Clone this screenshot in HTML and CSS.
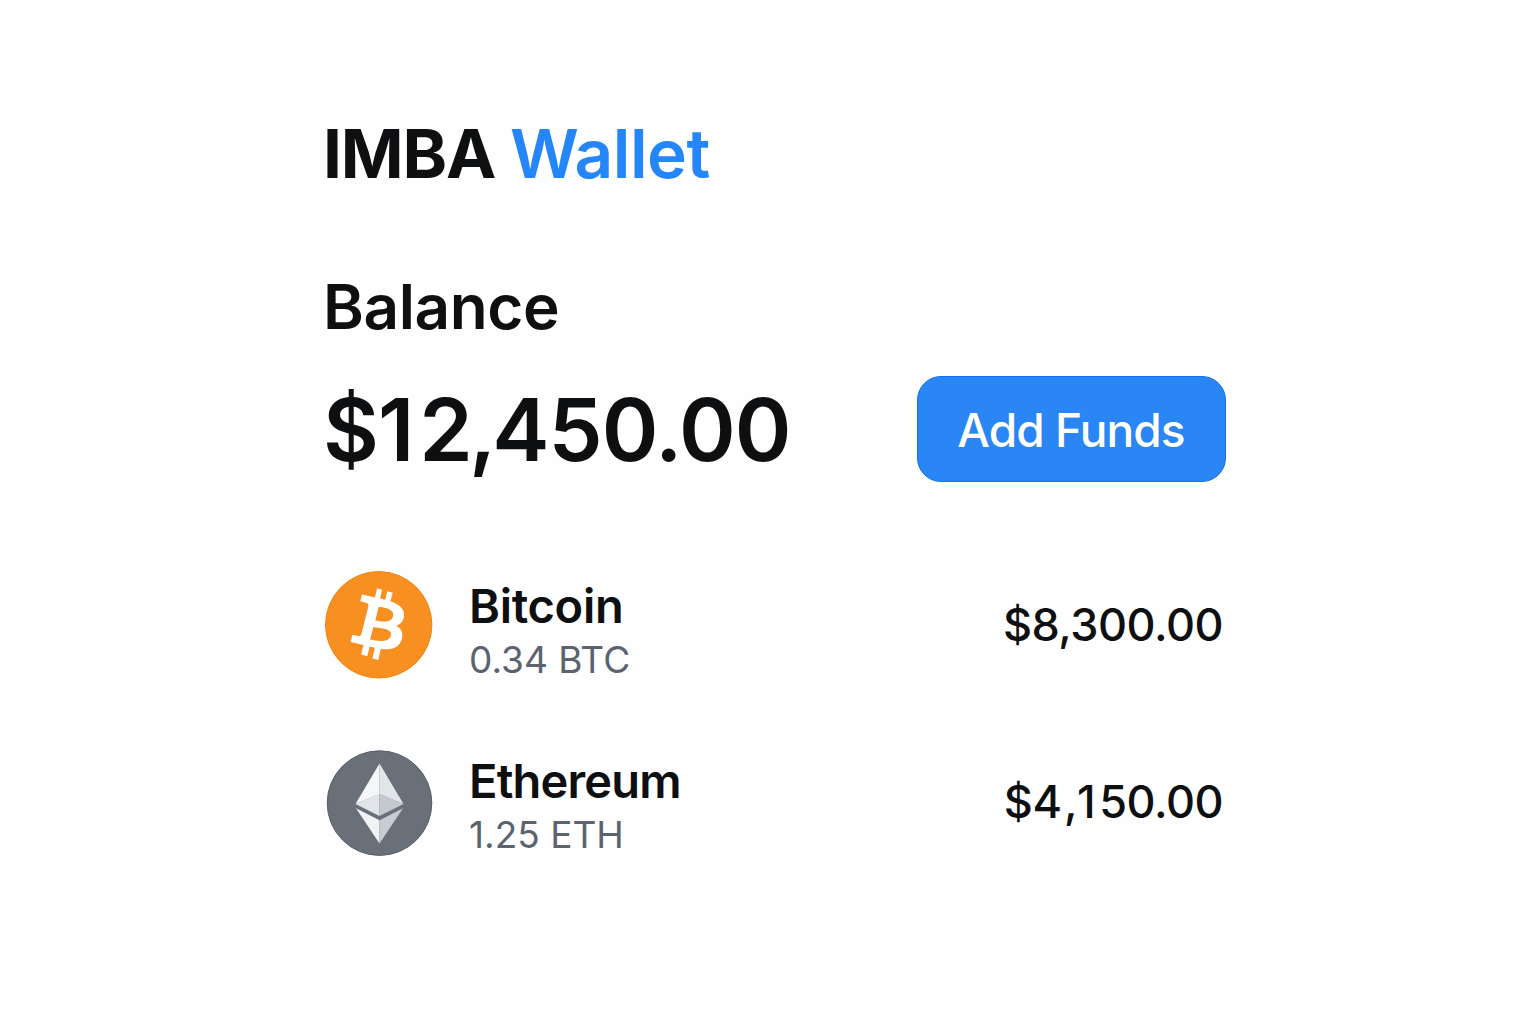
FILE: index.html
```html
<!DOCTYPE html>
<html lang="en">
<head>
<meta charset="utf-8">
<title>IMBA Wallet</title>
<link rel="stylesheet" href="styles.css">
</head>
<body>
<main class="wallet">
  <h1 class="brand">IMBA <span class="brand-accent">Wallet</span></h1>
  <section class="balance">
    <h2 class="balance-label">Balance</h2>
    <div class="balance-row">
      <div class="balance-amount">$<span class="digit-one">1</span><span class="before-group">2,</span>450.00</div>
      <button class="add-funds" type="button">Add Funds</button>
    </div>
  </section>
  <ul class="assets">
    <li class="asset">
      <svg class="coin" viewBox="0 0 108 108" aria-hidden="true">
        <circle cx="53.700" cy="53.800" r="53.200" fill="#f79021" stroke="#f28310" stroke-width="1"/>
        <path fill="#fff" fill-rule="evenodd" d="M37 23.500L50 26.500L52 17.400L57 18.600L55.200 27.500L60.300 28.700L62.300 20.200L67.700 21.700L65.500 30.300C74.500 33.500 80 38 79 45.500C78.200 50.500 75.500 53.500 71 54.800C76.300 57.500 78.500 62 76.800 68C74.300 77 66.500 79.300 55.800 77.900L53.300 89L47.500 87.600L49.800 76.700L44.700 75.500L42.300 85.200L36.200 83.600L38.500 74L25.700 71L27.300 63.800L33 65C35 65.300 36 64.600 36.500 62.800L43.200 36C43.800 33.500 43 32.200 41 31.800L35.300 30.300ZM53.800 35.700L50.300 49.200C56.500 50.700 66 52.200 68 45.500C70 38.200 60 36.600 53.800 35.700ZM48.300 56.200L45 68.200C52 70.200 63.500 72 65.800 64.700C68 57.200 55.500 57.200 48.300 56.200Z"/>
      </svg>
      <div class="asset-info">
        <div class="asset-name">Bitcoin</div>
        <div class="asset-holding">0.34 BTC</div>
      </div>
      <div class="asset-value">$8,300.00</div>
    </li>
    <li class="asset asset-eth">
      <svg class="coin" viewBox="0 -0.600 108 108" aria-hidden="true">
        <circle cx="54.500" cy="53.500" r="52.300" fill="#6a707a" stroke="#575e69" stroke-width="1"/>
        <path fill="#f5f6f7" d="M54.500 14L30.500 54.300L54.500 44.500Z"/>
        <path fill="#e2e5e9" d="M54.500 14L78.500 54.300L54.500 44.500Z"/>
        <path fill="#e1e4e8" d="M54.500 44L30.500 54.300L54.500 66.500Z"/>
        <path fill="#c3c9cf" d="M54.500 44L78.500 54.300L54.500 66.500Z"/>
        <path fill="#f0f2f4" d="M31 58.700L54.500 70.700V94Z"/>
        <path fill="#c7ccd2" d="M78 58.700L54.500 70.700V94Z"/>
      </svg>
      <div class="asset-info">
        <div class="asset-name">Ethereum</div>
        <div class="asset-holding">1.25 ETH</div>
      </div>
      <div class="asset-value">$<span class="before-group">4</span>,<span class="digit-one">1</span>50.00</div>
    </li>
  </ul>
</main>
</body>
</html>
```
FILE: styles.css
```css
* { box-sizing: border-box; }

body {
  margin: 0;
  background: #fefefe;
  color: #0e0f10;
  font-family: Inter, "Liberation Sans", sans-serif;
}

.wallet {
  width: 901px;
  margin-left: 325px;
  padding-top: 113px;
}

.brand,
.balance-label,
.assets {
  margin: 0;
  padding: 0;
}

.brand {
  margin-left: -2px;
  font-size: 67.500px;
  font-weight: 700;
  line-height: 81px;
  letter-spacing: -1.200px;
  white-space: nowrap;
}

.brand-accent {
  color: #2586fa;
  font-weight: 600;
  letter-spacing: -0.500px;
}

.balance { margin-top: 77px; }

.balance-label {
  margin-left: -2px;
  font-size: 62px;
  font-weight: 600;
  line-height: 71px;
  letter-spacing: -0.400px;
}

.balance-row {
  display: flex;
  align-items: center;
  justify-content: space-between;
  height: 106px;
  margin-top: 34px;
}

.balance-amount {
  margin-left: -2px;
  padding-top: 2px;
  font-size: 86px;
  font-weight: 600;
  line-height: 104px;
  letter-spacing: -1px;
  white-space: nowrap;
}

.balance-amount .digit-one { letter-spacing: 5px; }
.balance-amount .before-group { letter-spacing: -4px; }

.add-funds {
  width: 309px;
  height: 106px;
  padding: 2px 1px 0 0;
  border: 1px solid #1271ee;
  border-radius: 24px;
  background: #2a85f5;
  color: #fff;
  font-family: inherit;
  font-size: 46px;
  font-weight: 500;
  letter-spacing: -0.900px;
  white-space: nowrap;
}

.assets {
  margin-top: 89px;
  list-style: none;
}

.asset {
  display: flex;
  align-items: center;
  height: 108px;
}

.asset-eth {
  margin-top: 70px;
}

.coin {
  flex: none;
  width: 108px;
  height: 108px;
}

.asset-info {
  margin-left: 36px;
  padding-top: 13px;
  white-space: nowrap;
}

.asset-eth .asset-info { padding-top: 7px; }

.asset-name {
  font-size: 47px;
  font-weight: 600;
  line-height: 56px;
  letter-spacing: -0.300px;
}

.asset-eth .asset-name { letter-spacing: -0.800px; }

.asset-holding {
  color: #5b636e;
  font-size: 37px;
  line-height: 52px;
}

.asset-value {
  margin-left: auto;
  margin-right: 3px;
  font-size: 45px;
  font-weight: 500;
  line-height: 56px;
  letter-spacing: -0.500px;
  white-space: nowrap;
}

.asset-eth .asset-value { padding-bottom: 2px; }

.asset-value .before-group { letter-spacing: 2px; }
.asset-value .digit-one { letter-spacing: 3.500px; }
```
